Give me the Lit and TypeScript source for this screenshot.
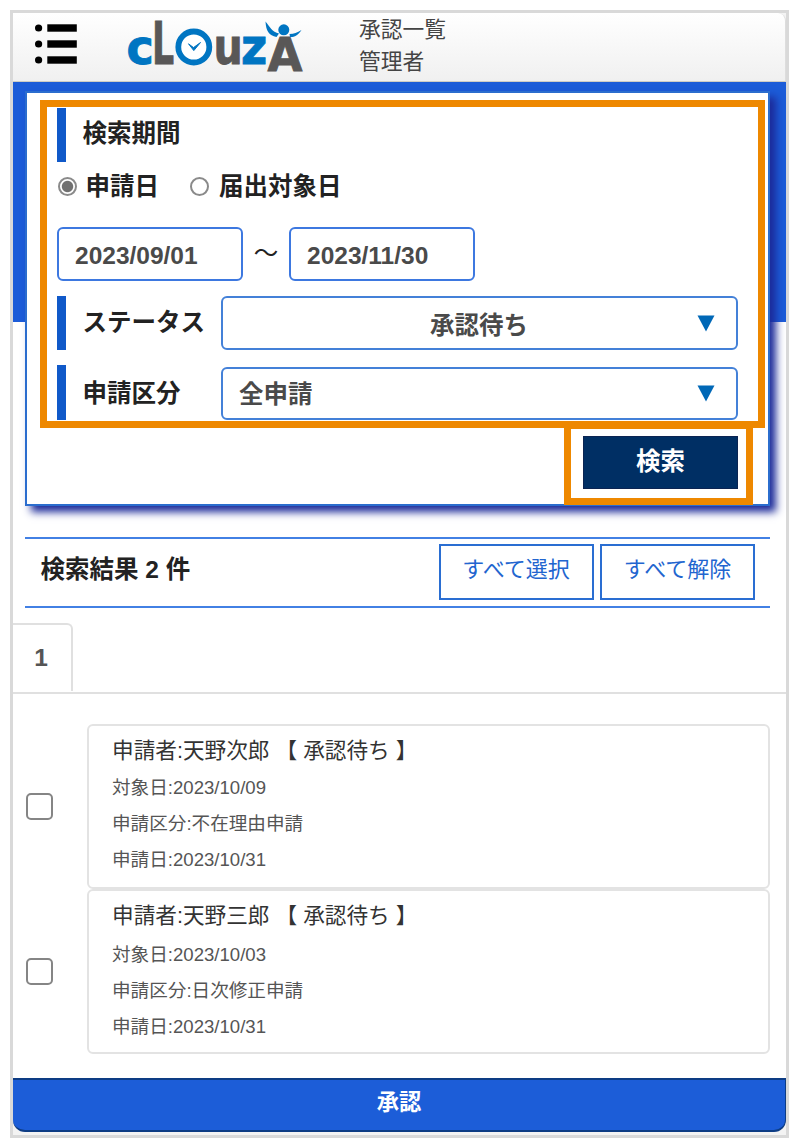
import { LitElement, html, css, svg } from "lit";
import { customElement, property } from "lit/decorators.js";

interface Application {
  applicant: string;
  status: string;
  target: string;
  kind: string;
  date: string;
}

const APPLICATIONS: Application[] = [
  { applicant: "天野次郎", status: "承認待ち", target: "2023/10/09", kind: "不在理由申請", date: "2023/10/31" },
  { applicant: "天野三郎", status: "承認待ち", target: "2023/10/03", kind: "日次修正申請", date: "2023/10/31" },
];

@customElement("clouza-logo")
class ClouzaLogo extends LitElement {
  static styles = css`
    :host { display: block; width: 180px; height: 60px; }
    svg { display: block; overflow: visible; }
    text { font-family: "DejaVu Sans", sans-serif; font-weight: 700; stroke-width: 0.9px; }
    .blue { fill: #0075c2; }
    .gray { fill: #595757; }
    text.blue { stroke: #0075c2; }
    text.gray { stroke: #595757; }
  `;
  // One letter, fitted horizontally around its left edge.
  letter(ch: string, cls: string, x: number, y: number, size: number, sx: number) {
    return svg`<text class=${cls} font-size=${size} transform="translate(${x} ${y}) scale(${sx} 1)">${ch}</text>`;
  }
  render() {
    return html`<svg width="180" height="60" viewBox="125 16 180 60">
      ${this.letter("c", "blue", 126.6, 64, 48, 0.96)}
      ${this.letter("L", "gray", 152, 64.3, 59, 0.59)}
      ${this.letter("u", "gray", 213.6, 64, 49, 0.84)}
      ${this.letter("z", "blue", 241, 64.3, 49, 0.92)}
      ${this.letter("A", "gray", 267.4, 71.3, 46, 0.98)}
      <circle cx="193.8" cy="47" r="15.5" fill="#fff" stroke="#0075c2" stroke-width="5.8" />
      <path d="M188.5 43.8 L193.5 47.6 L200.5 42.5 L193.8 50.6 Z" fill="#0075c2" stroke="#0075c2" stroke-width="1" />
      <circle cx="283.8" cy="29.8" r="5.5" class="blue" />
      <path d="M265.5 21.5 C270 27 272 32 279 33.6 L276.5 37 C269 35.5 266 31 265.5 21.5 Z" class="blue" />
      <path d="M301.5 30 C298 35.5 294 37.3 290 37 L289.5 34 C294 34 297 32.5 301.5 30 Z" class="blue" />
    </svg>`;
  }
}

@customElement("application-row")
class ApplicationRow extends LitElement {
  @property({ attribute: false }) item!: Application;
  static styles = css`
    :host { display: flex; align-items: center; height: 165px; padding: 0 16px 0 13px; box-sizing: border-box; }
    .check {
      appearance: none; box-sizing: border-box; flex: none;
      width: 27px; height: 27px; margin: 0 34px 1px 0;
      border: 2px solid #858585; border-radius: 5px; background: #fff;
    }
    .box {
      flex: 1; height: 165px; box-sizing: border-box; padding: 8px 23px 0;
      border: 2px solid #e3e3e3; border-radius: 6px; background: #fff;
    }
    .title { font-size: 21.65px; line-height: 34px; height: 36px; color: #333; white-space: pre; }
    :host(:last-child) .title { line-height: 34px; height: 38px; }
    .line { font-size: 18.6px; line-height: 36px; color: #555; }
  `;
  render() {
    const a = this.item;
    return html`
      <input class="check" type="checkbox" aria-label=${a.applicant} />
      <div class="box">
        <div class="title">申請者:${a.applicant} 【 ${a.status} 】</div>
        <div class="line">対象日:${a.target}</div>
        <div class="line">申請区分:${a.kind}</div>
        <div class="line">申請日:${a.date}</div>
      </div>
    `;
  }
}

@customElement("app-root")
class AppRoot extends LitElement {
  static styles = css`
    :host {
      display: block; box-sizing: border-box; height: 1139px; padding: 10px 1px 1px 10px;
      background: #fff; color: #333;
      font-family: "Liberation Sans", "Noto Sans CJK JP", sans-serif;
    }
    * { box-sizing: border-box; }
    .frame { height: 1128px; border: 3px solid #d9d9d9; display: flex; flex-direction: column; background: #f3f3f3; }
    header {
      display: flex; height: 69px; flex: none; padding-left: 22px;
      background: linear-gradient(#fff, #f0f0f0);
      border-bottom: 1px solid #cfcdc4; border-top-right-radius: 8px;
      border-right: 1px solid #ddd;
    }
    .menu { margin: 10px 0 0; display: block; }
    clouza-logo { margin: 3px 0 0 48px; }
    .who { margin: 1px 0 0 54px; font-size: 21.75px; line-height: 32px; color: #444; }
    .body { background: #fff; flex: none; height: 996px; display: flex; flex-direction: column; }
    .hero { height: 455px; padding: 9px 16px 0 12px; background: linear-gradient(#1c5cd8 240px, #fff 240px); }
    .panel {
      position: relative; height: 415px; padding: 15px 30px 0;
      background: #fff; border: 2px solid #2b6dce; box-shadow: 6px 6px 8px #1c2a99;
      color: #222; font-size: 24.5px; font-weight: 700;
      display: flex; flex-direction: column;
    }
    .mark { position: absolute; border: 7px solid #ee8800; pointer-events: none; }
    .mark-form { left: 13px; top: 7px; width: 725px; height: 328px; }
    .mark-button { left: 537px; top: 329px; width: 189px; height: 83px; }
    .label { height: 54px; border-left: 9px solid #1059c9; padding-left: 16.5px; line-height: 52px; }
    .radios { display: flex; align-items: center; height: 50px; }
    .radio { display: flex; align-items: center; line-height: 50px; }
    .radio + .radio { margin-left: 30px; }
    .radio input {
      appearance: none; width: 19px; height: 19px; margin: 0 8.5px 2px 1px;
      border: 2px solid #8a8a8a; border-radius: 50%; background: #fff;
    }
    .radio + .radio input { margin-right: 10px; }
    .radio input:checked { background: radial-gradient(circle, #707070 5.2px, #fff 6.2px); }
    .dates { display: flex; margin-top: 15px; }
    .dates span { width: 46px; text-align: center; line-height: 54px; font-weight: 400; }
    .date, .select { border: 2px solid #3d78e0; border-radius: 6px; height: 54px; color: #4a4a4a; background: #fff; }
    .date { width: 186px; padding-left: 16px; line-height: 54px; }
    .select { width: 517px; display: flex; align-items: center; padding: 0 20px 0 16px; border-color: #4481d8; }
    .value { flex: 1; line-height: 48px; padding-top: 4px; }
    .value.mid { text-align: center; padding-left: 23px; padding-top: 6px; }
    .kind .value { padding-top: 2px; }
    .field { display: flex; margin-top: 15px; height: 54px; }
    .field .label { width: 164px; flex: none; white-space: nowrap; line-height: 54px; }
    .field.kind { height: 55px; }
    .field.kind .label { height: 55px; line-height: 57px; }
    .kind .select { margin-top: 2px; height: 53px; }
    .search {
      align-self: flex-end; margin-top: 16px; width: 155px; height: 53px;
      font: inherit; line-height: 50px; padding: 0 0 1px; border: 1px solid #0b2452; background: #002f64; color: #fff;
    }
    .summary {
      display: flex; height: 71px; margin: 0 16px 0 12px; padding: 5px 15px 0 15.5px; flex: none;
      border-top: 2px solid #4280e4; border-bottom: 2px solid #4280e4;
    }
    .count { flex: 1; font-size: 24.5px; font-weight: 700; line-height: 52px; color: #222; }
    .bulk {
      width: 155px; height: 56px; margin-left: 6.5px; padding: 0 0 11px; border: 2px solid #2a6ed2;
      background: #fff; color: #2265cf; font: inherit; font-size: 22px;
    }
    .tabs { height: 86px; padding-top: 15px; border-bottom: 2px solid #e0e0e0; flex: none; }
    .tab {
      width: 60px; height: 68px; border: 2px solid #e0e0e0; border-width: 2px 2px 0 0; border-top-right-radius: 6px;
      font-size: 24.5px; font-weight: 700; line-height: 65px; text-align: center; padding-right: 2px; color: #555;
    }
    .list { padding-top: 30px; }
    .approve {
      flex: none; height: 54px; padding: 0 0 11px; font: inherit; font-size: 22.3px; font-weight: 700;
      color: #fff; background: #1c5dd8; border: 2px solid #0d3c84; border-width: 2px 1px 2px 0; border-radius: 0 0 12px 12px;
    }
  `;
  render() {
    return html`
      <div class="frame">
        <header>
          <svg class="menu" width="42" height="42" viewBox="0 0 42 42">
            ${[5, 21, 37].map((y) => svg`<circle cx="3.6" cy=${y} r="3.6" /><rect x="12.3" y=${y - 3.7} width="29.5" height="7.4" />`)}
          </svg>
          <clouza-logo></clouza-logo>
          <div class="who"><div>承認一覧</div><div>管理者</div></div>
        </header>
        <div class="body">
          <div class="hero">
            <section class="panel">
              <div class="label">検索期間</div>
              <div class="radios">
                <label class="radio"><input type="radio" name="basis" checked />申請日</label>
                <label class="radio"><input type="radio" name="basis" />届出対象日</label>
              </div>
              <div class="dates">
                <div class="date">2023/09/01</div><span>～</span><div class="date">2023/11/30</div>
              </div>
              <div class="field">
                <div class="label">ステータス</div>
                <div class="select"><div class="value mid">承認待ち</div>
                  <svg width="20" height="17" viewBox="0 0 20 17"><path d="M1.5 0.5H18.5L10 16.5Z" fill="#0068b7" /></svg></div>
              </div>
              <div class="field kind">
                <div class="label">申請区分</div>
                <div class="select"><div class="value">全申請</div>
                  <svg width="20" height="17" viewBox="0 0 20 17"><path d="M1.5 0.5H18.5L10 16.5Z" fill="#0068b7" /></svg></div>
              </div>
              <button class="search">検索</button>
              <div class="mark mark-form"></div>
              <div class="mark mark-button"></div>
            </section>
          </div>
          <div class="summary">
            <div class="count">検索結果 2 件</div>
            <button class="bulk">すべて選択</button>
            <button class="bulk">すべて解除</button>
          </div>
          <div class="tabs"><div class="tab">1</div></div>
          <div class="list">${APPLICATIONS.map((a) => html`<application-row .item=${a}></application-row>`)}</div>
        </div>
        <button class="approve">承認</button>
      </div>
    `;
  }
}
